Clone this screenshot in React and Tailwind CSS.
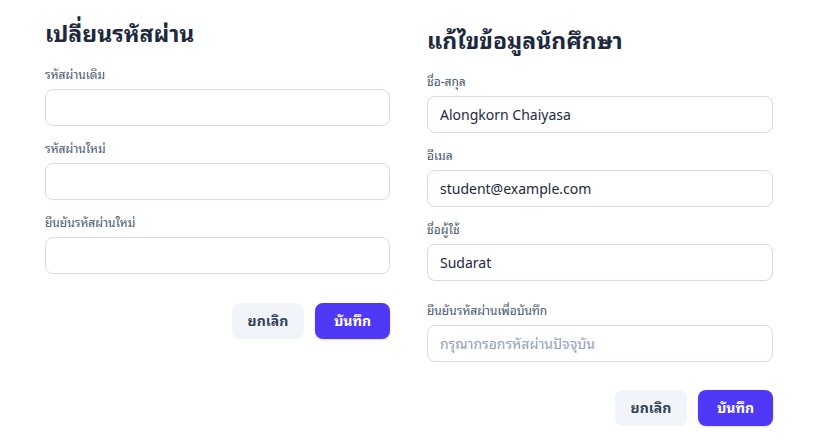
const font = { fontFamily: '"Noto Sans", "Noto Sans Thai Looped", "Noto Sans Thai", "Noto Sans CJK SC", sans-serif' };

function Field({ label, value, placeholder, className = "" }) {
  return (
    <div className={className}>
      <label className="block text-xs leading-4 text-slate-600 mb-1.5">{label}</label>
      <input
        readOnly
        defaultValue={value}
        placeholder={placeholder}
        className="block w-full h-[37px] rounded-lg border border-[#d5dce7] bg-white px-3 text-sm text-slate-800 placeholder:text-slate-400 outline-none"
      />
    </div>
  );
}

function Actions({ className = "" }) {
  return (
    <div className={`flex justify-end gap-[11px] ${className}`}>
      <button className="h-9 w-[72px] rounded-lg bg-slate-100 text-sm font-bold text-slate-700">ยกเลิก</button>
      <button className="h-9 w-[75px] rounded-lg bg-[#4f39f6] text-sm font-bold text-white shadow-sm">บันทึก</button>
    </div>
  );
}

export default function App() {
  return (
    <div className="w-[822px] h-[447px] bg-white overflow-hidden flex" style={font}>
      {/* เปลี่ยนรหัสผ่าน */}
      <div className="ml-[45px] w-[345px] pt-[19px]">
        <h2 className="text-[23px] leading-7 font-bold text-slate-800 mb-5">เปลี่ยนรหัสผ่าน</h2>
        <div className="space-y-[15px]">
          <Field label="รหัสผ่านเดิม" />
          <Field label="รหัสผ่านใหม่" />
          <Field label="ยืนยันรหัสผ่านใหม่" />
        </div>
        <Actions className="mt-[29px]" />
      </div>

      {/* แก้ไขข้อมูลนักศึกษา */}
      <div className="ml-[37px] w-[346px] pt-[26px]">
        <h2 className="text-[23px] leading-7 font-bold text-slate-800 mb-5">แก้ไขข้อมูลนักศึกษา</h2>
        <div className="space-y-[15px]">
          <Field label="ชื่อ-สกุล" value="Alongkorn Chaiyasa" />
          <Field label="อีเมล" value="student@example.com" />
          <Field label="ชื่อผู้ใช้" value="Sudarat" />
          <Field label="ยืนยันรหัสผ่านเพื่อบันทึก" placeholder="กรุณากรอกรหัสผ่านปัจจุบัน" className="!mt-[22px]" />
        </div>
        <Actions className="mt-[28px]" />
      </div>
    </div>
  );
}
